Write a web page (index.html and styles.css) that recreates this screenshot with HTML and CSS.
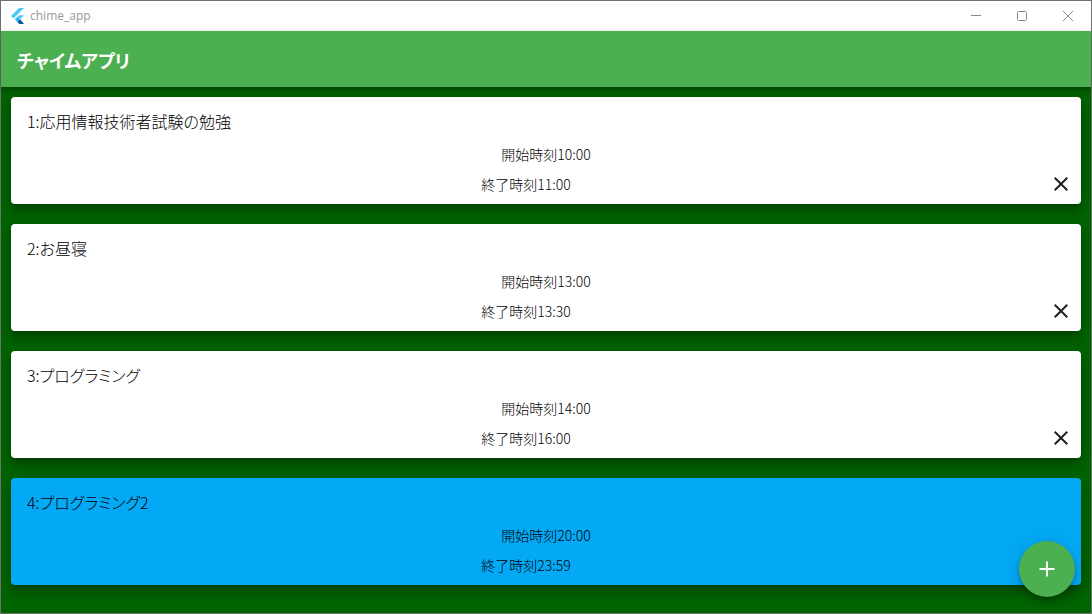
FILE: index.html
```html
<!DOCTYPE html>
<html lang="ja">
<head>
<meta charset="utf-8">
<meta name="viewport" content="width=device-width, initial-scale=1">
<title>chime_app</title>
<link rel="stylesheet" href="styles.css">
</head>
<body>
<div class="window">
  <div class="titlebar">
    <svg class="logo" viewBox="0 0 16 16" aria-hidden="true">
      <path fill="#54c5f8" d="M9 0h5L3.500 10.500 1 8z"/>
      <path fill="#54c5f8" d="M9 7.200h5L10 11.200 7.500 8.700z"/>
      <path fill="#29b6f6" d="M4.800 11.300 7.400 8.700 10 11.300 7.400 13.900z"/>
      <path fill="#01579b" d="M7.400 13.900 10 11.300 14 16H9.500z"/>
    </svg>
    <span class="window-name">chime_app</span>
    <div class="window-controls">
      <button class="window-button" type="button" aria-label="最小化"><svg viewBox="0 0 10 10"><path d="M0 4.500h10"/></svg></button>
      <button class="window-button" type="button" aria-label="最大化"><svg viewBox="0 0 10 10"><rect x=".5" y=".5" width="9" height="9" rx="1"/></svg></button>
      <button class="window-button" type="button" aria-label="閉じる"><svg viewBox="0 0 10 10"><path d="M0 0l10 10M10 0L0 10"/></svg></button>
    </div>
  </div>
  <header class="appbar"><h1 class="app-title">チャイムアプリ</h1></header>
  <main class="schedule">
    <article class="card">
      <h2 class="card-title">1:応用情報技術者試験の勉強</h2>
      <p class="time">開始時刻10:00</p>
      <div class="card-end">
        <p class="time">終了時刻11:00</p>
        <button class="delete" type="button" aria-label="削除"><svg viewBox="0 0 24 24"><path d="M19 6.410 17.590 5 12 10.590 6.410 5 5 6.410 10.590 12 5 17.590 6.410 19 12 13.410 17.590 19 19 17.590 13.410 12z"/></svg></button>
      </div>
    </article>
    <article class="card">
      <h2 class="card-title">2:お昼寝</h2>
      <p class="time">開始時刻13:00</p>
      <div class="card-end">
        <p class="time">終了時刻13:30</p>
        <button class="delete" type="button" aria-label="削除"><svg viewBox="0 0 24 24"><path d="M19 6.410 17.590 5 12 10.590 6.410 5 5 6.410 10.590 12 5 17.590 6.410 19 12 13.410 17.590 19 19 17.590 13.410 12z"/></svg></button>
      </div>
    </article>
    <article class="card">
      <h2 class="card-title">3:プログラミング</h2>
      <p class="time">開始時刻14:00</p>
      <div class="card-end">
        <p class="time">終了時刻16:00</p>
        <button class="delete" type="button" aria-label="削除"><svg viewBox="0 0 24 24"><path d="M19 6.410 17.590 5 12 10.590 6.410 5 5 6.410 10.590 12 5 17.590 6.410 19 12 13.410 17.590 19 19 17.590 13.410 12z"/></svg></button>
      </div>
    </article>
    <article class="card card-active">
      <h2 class="card-title">4:プログラミング2</h2>
      <p class="time">開始時刻20:00</p>
      <div class="card-end">
        <p class="time">終了時刻23:59</p>
        <button class="delete" type="button" aria-label="削除"><svg viewBox="0 0 24 24"><path d="M19 6.410 17.590 5 12 10.590 6.410 5 5 6.410 10.590 12 5 17.590 6.410 19 12 13.410 17.590 19 19 17.590 13.410 12z"/></svg></button>
      </div>
    </article>
  </main>
  <button class="fab" type="button" aria-label="追加"><svg viewBox="0 0 24 24"><path d="M19.500 13H13v6.500h-2V13H4.500v-2H11V4.500h2V11h6.500z"/></svg></button>
</div>
</body>
</html>
```
FILE: styles.css
```css
* {
  box-sizing: border-box;
}

body {
  margin: 0;
  font-family: "Noto Sans CJK JP", sans-serif;
  font-feature-settings: "palt";
  color: #000;
}

h1, h2, p {
  margin: 0;
}

button {
  display: grid;
  place-items: center;
  border: 0;
  padding: 0;
  background: none;
  color: #212121;
}

.window {
  position: relative;
  display: flex;
  flex-direction: column;
  min-height: 100vh;
  border: 1px solid #707070;
  background: #006400;
}

.titlebar {
  display: flex;
  align-items: center;
  height: 30px;
  padding-left: 9px;
  background: #fff;
}

.logo {
  width: 16px;
  height: 16px;
}

.window-name {
  margin-left: 4px;
  font-family: "Open Sans", sans-serif;
  font-size: 12px;
  line-height: 16px;
  color: #999;
}

.window-controls {
  display: flex;
  margin-left: auto;
}

.window-button {
  width: 46px;
  height: 30px;
}

.window-button svg {
  width: 10px;
  height: 10px;
  fill: none;
  stroke: #888;
}

.appbar {
  display: flex;
  align-items: center;
  height: 56px;
  padding: 2px 16px 0;
  background: #4caf50;
  box-shadow: 0 2px 4px -1px rgba(0, 0, 0, .2), 0 4px 5px rgba(0, 0, 0, .14), 0 1px 10px rgba(0, 0, 0, .12);
}

.app-title {
  font-size: 18px;
  font-weight: 700;
  line-height: 24px;
  color: #fff;
}

.schedule {
  display: grid;
  gap: 20px;
  padding: 10px;
}

.card {
  border-radius: 4px;
  background: #fff;
  box-shadow: 0 5px 5px -3px rgba(0, 0, 0, .2), 0 8px 10px 1px rgba(0, 0, 0, .14), 0 3px 14px 2px rgba(0, 0, 0, .12);
}

.card-active {
  background: #03a9f4;
}

.card-title {
  padding: 14px 16px 13px;
  font-size: 16px;
  font-weight: 300;
  line-height: 20px;
}

.time {
  flex: 1;
  font-size: 14px;
  font-weight: 300;
  line-height: 20px;
  text-align: center;
}

.card-end {
  display: flex;
  align-items: center;
}

.delete {
  width: 40px;
  height: 40px;
}

.delete svg,
.fab svg {
  width: 24px;
  height: 24px;
  fill: currentColor;
}

.fab {
  position: fixed;
  right: 17px;
  bottom: 17px;
  width: 56px;
  height: 56px;
  border-radius: 50%;
  background: #4caf50;
  color: #fff;
  box-shadow: 0 3px 5px -1px rgba(0, 0, 0, .2), 0 6px 10px rgba(0, 0, 0, .14), 0 1px 18px rgba(0, 0, 0, .12);
}
```
